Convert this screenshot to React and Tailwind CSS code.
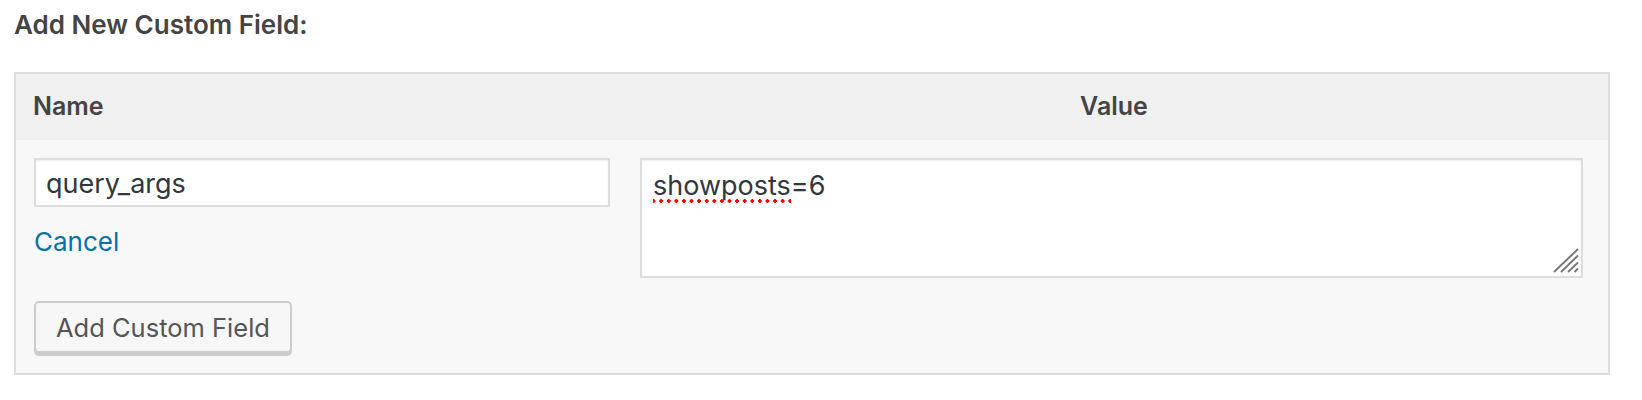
import React from 'react'

function ResizeGrip() {
  return (
    <svg className="absolute right-[2px] bottom-[3px]" width="26" height="25" viewBox="0 0 26 25">
      <g stroke="#7a7a7a" strokeWidth="2">
        <line x1="1" y1="24" x2="25" y2="1" />
        <line x1="8" y1="24" x2="25" y2="7.5" />
        <line x1="15" y1="24" x2="25" y2="14.5" />
        <line x1="21.5" y1="24" x2="25" y2="20.5" />
      </g>
    </svg>
  )
}

export default function App() {
  return (
    <div className="min-h-[400px] bg-white pl-[14px] pt-[7px] font-['Inter','Liberation_Sans',sans-serif] text-[#444]">
      <p className="text-[26px] leading-[36px] font-semibold">Add New Custom Field:</p>

      <div className="mt-[29px] w-[1596px] border-2 border-[#dddddd]">
        {/* table head */}
        <div className="grid h-[66px] grid-cols-[609px_1fr] items-center bg-[#f0f0f0] text-[25px] font-semibold">
          <div className="pl-[17px]">Name</div>
          <div className="pl-[15px] pr-[20px] text-center">Value</div>
        </div>

        {/* new meta row */}
        <div className="grid grid-cols-[609px_1fr] bg-[#f8f8f8] pt-[18px] pb-[20px]">
          <div className="pl-[18px] pr-[15px]">
            <div className="flex h-[49px] items-center border-2 border-[#dddddd] bg-white pt-[4px] pl-[10px] text-[27px] text-[#32373c] shadow-[inset_0_1px_2px_rgba(0,0,0,0.07)]">
              query_args
            </div>
            <div className="mt-[20px] h-[30px] text-[26px] leading-[30px] text-[#0073aa]">Cancel</div>
            <button className="mt-[44px] h-[52px] rounded-[5px] border-2 border-[#cccccc] bg-[#f7f7f7] px-[20px] pt-[3px] text-[25.5px] text-[#555] shadow-[0_3px_0_#cccccc]">
              Add Custom Field
            </button>
          </div>

          <div className="pl-[15px] pr-[25px]">
            <div className="relative h-[120px] border-2 border-[#dddddd] bg-white pt-[8px] pl-[11px] text-[27px] leading-[36px] text-[#32373c] shadow-[inset_0_1px_2px_rgba(0,0,0,0.07)]">
              <span className="bg-[radial-gradient(circle,#ff0000_1.6px,transparent_2px)] bg-[length:7.6px_4px] bg-bottom bg-repeat-x pb-[1px]">showposts</span>=6
              <ResizeGrip />
            </div>
          </div>
        </div>
      </div>
    </div>
  )
}
